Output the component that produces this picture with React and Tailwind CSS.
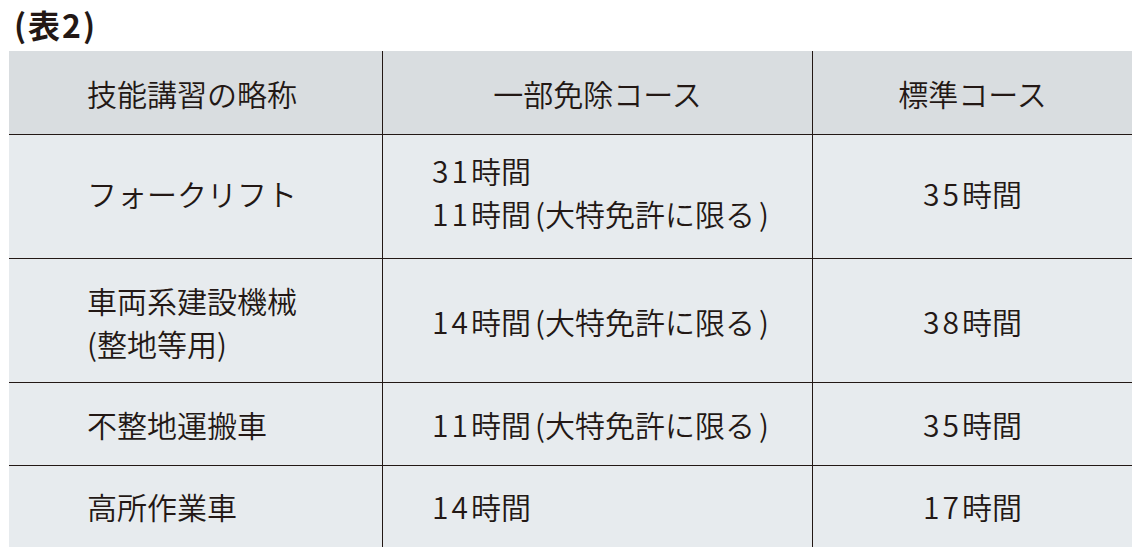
import React from "react";

const N = ({ children }) => <span className="tracking-[3px]">{children}</span>;
const Note = () => (
  <>
    <span className="ml-[4px]">(</span>大特免許に限る<span className="ml-[4px]">)</span>
  </>
);

const rows = [
  {
    h: "h-[124px]",
    c1: ["フォークリフト"],
    c1pb: "pb-[6px]",
    c2: [
      <>
        <N>31</N>時間
      </>,
      <>
        <N>11</N>時間<Note />
      </>,
    ],
    c2pb: "pb-[10px]",
    c3: "35",
    c3pb: "pb-[6px]",
  },
  {
    h: "h-[124px]",
    c1: ["車両系建設機械", "(整地等用)"],
    c1pb: "pt-[2px]",
    c2: [
      <>
        <N>14</N>時間<Note />
      </>,
    ],
    c2pb: "pt-[2px]",
    c3: "38",
    c3pb: "pt-[2px]",
  },
  {
    h: "h-[83px]",
    c1: ["不整地運搬車"],
    c2: [
      <>
        <N>11</N>時間<Note />
      </>,
    ],
    c3: "35",
  },
  {
    h: "h-[81px]",
    c1: ["高所作業車"],
    c2: [
      <>
        <N>14</N>時間
      </>,
    ],
    c3: "17",
    last: true,
  },
];

export default function App() {
  return (
    <div
      className="w-[1142px] h-[554px] bg-white text-[#231815]"
      style={{ fontFamily: '"Noto Sans CJK JP", "Noto Sans", sans-serif' }}
    >
      <div className="h-[51px] pl-[14px] text-[32px] font-bold leading-[48px] tracking-[2px]">(表2)</div>
      <div className="ml-[9px] w-[1123px] grid grid-cols-[374px_430px_319px] text-[30px] leading-[43px] font-[350]">
        <div className="h-[84px] bg-[#d9dde0] border-r border-b border-[#231815] flex items-center pl-[78px] pt-[2px]">
          技能講習の略称
        </div>
        <div className="h-[84px] bg-[#d9dde0] border-r border-b border-[#231815] flex items-center justify-center pt-[2px]">
          一部免除コース
        </div>
        <div className="h-[84px] bg-[#d9dde0] border-b border-[#231815] flex items-center justify-center pt-[2px]">
          標準コース
        </div>
        {rows.map((r, i) => (
          <React.Fragment key={i}>
            <div
              className={`${r.h} ${r.c1pb || ""} bg-[#e7ebee] border-r ${r.last ? "" : "border-b"} border-[#231815] flex flex-col justify-center pl-[78px]`}
            >
              {r.c1.map((t, j) => (
                <div key={j}>{t}</div>
              ))}
            </div>
            <div
              className={`${r.h} ${r.c2pb || ""} bg-[#e7ebee] border-r ${r.last ? "" : "border-b"} border-[#231815] flex flex-col justify-center pl-[49px]`}
            >
              {r.c2.map((t, j) => (
                <div key={j}>{t}</div>
              ))}
            </div>
            <div
              className={`${r.h} ${r.c3pb || ""} bg-[#e7ebee] ${r.last ? "" : "border-b"} border-[#231815] flex items-center justify-center`}
            >
              <span>
                <N>{r.c3}</N>時間
              </span>
            </div>
          </React.Fragment>
        ))}
      </div>
    </div>
  );
}
